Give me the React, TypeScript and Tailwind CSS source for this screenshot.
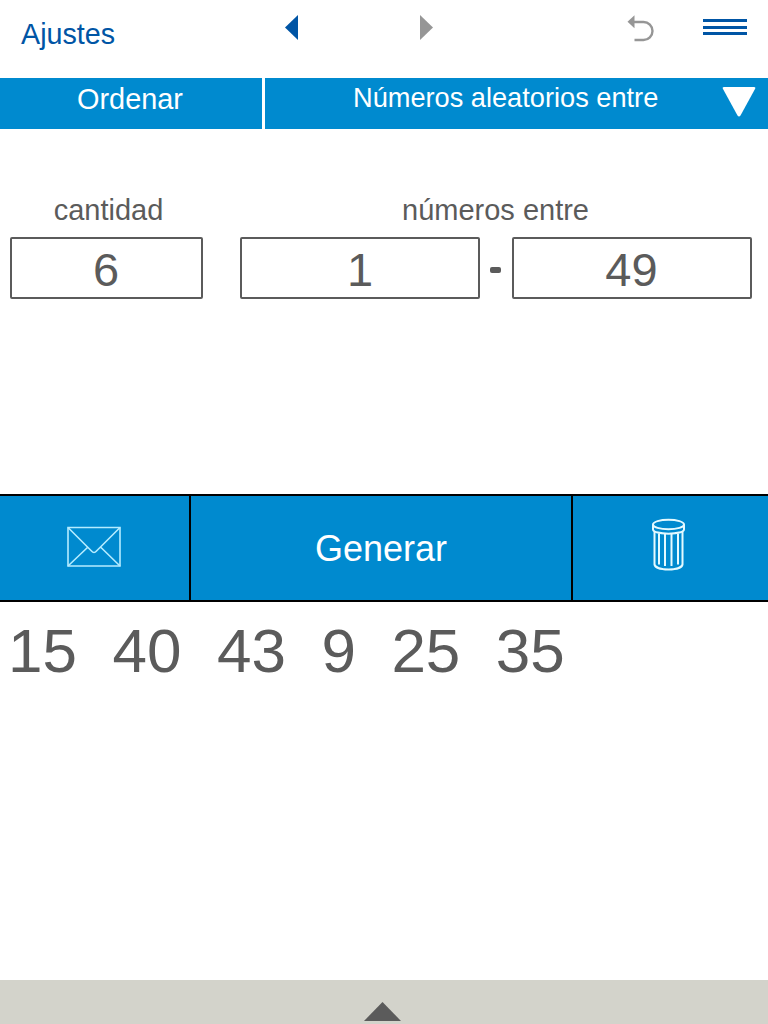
import type { ReactNode } from 'react'

const results = [15, 40, 43, 9, 25, 35]

function TopBar() {
    return (
        <header className="flex h-[78px] items-start text-[#0055a5]">
            <button className="ml-[21px] mt-5 w-[264px] text-left text-[28.7px] leading-none">Ajustes</button>
            <button aria-label="Anterior" className="mt-[15px]">
                <svg width="13" height="25" viewBox="0 0 13 25" fill="currentColor">
                    <path d="M13 0v25L0 12.5z" />
                </svg>
            </button>
            <button aria-label="Siguiente" className="ml-[122px] mt-[15px] text-[#969696]">
                <svg width="13" height="25" viewBox="0 0 13 25" fill="currentColor">
                    <path d="M0 0v25l13-12.5z" />
                </svg>
            </button>
            <button aria-label="Deshacer" className="ml-[194px] mt-[14px] text-[#969696]">
                <svg width="30" height="30" viewBox="0 0 30 30" fill="none">
                    <path d="M5 8h11.5a9 9 0 0 1 0 18H7.5" stroke="currentColor" strokeWidth="2.4" />
                    <path d="M0.500 7.800L7.500 1.300v13z" fill="currentColor" />
                </svg>
            </button>
            <button aria-label="Menú" className="ml-[46px] mt-[19px] flex w-11 flex-col gap-[3.5px]">
                <span className="h-[3px] w-full bg-current" />
                <span className="h-[3px] w-full bg-current" />
                <span className="h-[3px] w-full bg-current" />
            </button>
        </header>
    )
}

function ModeBar() {
    return (
        <nav className="flex h-[51px] gap-[3px] text-white">
            <button className="flex w-[262px] items-start justify-center bg-[#008acf] pt-[7px] text-[28.9px] leading-none">
                <span className="-ml-[2px]">Ordenar</span>
            </button>
            <button className="flex flex-1 items-start bg-[#008acf] pl-[88px] pt-[6px] text-[27.2px] leading-none">
                <span className="w-[369px] whitespace-nowrap text-left">Números aleatorios entre</span>
                <svg className="mt-[3px]" width="34" height="31" viewBox="0 0 34 31" fill="white">
                    <path d="M2 0h30q2 0 1 2L18.5 28.5q-1.5 2-3 0L1 2Q0 0 2 0z" />
                </svg>
            </button>
        </nav>
    )
}

function NumberBox({ value, className }: { value: number; className: string }) {
    return (
        <div className={`h-[62px] rounded-[2px] border-2 border-[#5b5b5b] pt-[7px] text-center text-[47px] leading-none ${className}`}>
            {value}
        </div>
    )
}

function Settings() {
    return (
        <section className="flex h-[365px] gap-[37px] pl-[10px] pt-[67px] text-[#5b5b5b]">
            <div className="w-[193px]">
                <div className="h-[41px] pl-1 text-center text-[29px] leading-none">cantidad</div>
                <NumberBox value={6} className="w-[193px] pr-px" />
            </div>
            <div className="w-[512px]">
                <div className="h-[41px] pr-px text-center text-[29px] leading-none">números entre</div>
                <div className="flex items-center justify-between">
                    <NumberBox value={1} className="w-[240px]" />
                    <span className="-ml-[2px] mt-1 h-[6px] w-[11px] rounded-[2px] bg-[#5b5b5b]" />
                    <NumberBox value={49} className="w-[240px] pr-px" />
                </div>
            </div>
        </section>
    )
}

function Action({ className, children }: { className: string; children: ReactNode }) {
    return <button className={`flex bg-[#008acf] text-white ${className}`}>{children}</button>
}

function ActionBar() {
    return (
        <div className="flex h-[108px] gap-[2px] border-y-2 border-black bg-black">
            <Action className="w-[189px] pl-[67px] pt-[30px]">
                <svg width="54" height="42" viewBox="0 0 54 42" fill="none" stroke="#b5ecff" strokeWidth="1.6">
                    <path d="M1 1.5h52v38.5H1z" />
                    <path d="M1 1.5l23.5 23.5q2.5 3 5 0L53 1.5M1 40l20-19M53 40L33.5 21" />
                </svg>
            </Action>
            <Action className="w-[380px] justify-center pt-[35px] text-[36px] leading-none">Generar</Action>
            <Action className="flex-1 pl-[79px] pt-[22px]">
                <svg width="34" height="53" viewBox="0 0 34 53" fill="none" stroke="#e4faff" strokeWidth="2">
                    <ellipse cx="16.5" cy="6.5" rx="15.5" ry="4.8" />
                    <path d="M1 6.5v5C1.500 17 31.500 17 32 11.500v-5" />
                    <path d="M2.500 14v32.500C3.500 53 29.500 53 30.500 46.500V14" />
                    <path d="M7 15.5v31M13 16v32M19.500 16v32M26 15.5v31" />
                </svg>
            </Action>
        </div>
    )
}

export default function App() {
    return (
        <div className="flex h-screen flex-col overflow-hidden bg-white font-['Liberation_Sans',Arial,sans-serif]">
            <TopBar />
            <ModeBar />
            <Settings />
            <ActionBar />
            <main className="flex flex-1 gap-[35.5px] pl-[8px] pt-[18px] text-[62px] leading-none text-[#5b5b5b]">
                {results.map((n) => (
                    <span key={n}>{n}</span>
                ))}
            </main>
            <footer className="flex h-11 justify-center bg-[#d3d3cb] pt-[22px]">
                <svg className="-ml-[3px]" width="37" height="19" viewBox="0 0 37 19" fill="#5b5b5b">
                    <path d="M0 19L18.5 0 37 19z" />
                </svg>
            </footer>
        </div>
    )
}
